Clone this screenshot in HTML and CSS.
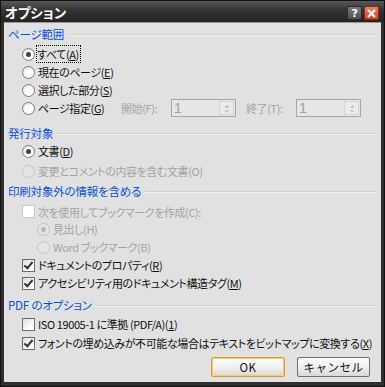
FILE: index.html
```html
<!DOCTYPE html>
<html lang="ja">
<head>
    <meta charset="UTF-8">
    <title>オプション</title>
    <link rel="stylesheet" href="styles.css">
</head>
<body>
    <div class="window">
        <div class="titlebar">
            <span class="title">オプション</span>
            <span class="tbtn help">?</span>
            <span class="tbtn close">
                <svg width="9" height="9" viewBox="0 0 9 9"><path d="M1 1L8 8M8 1L1 8" stroke="#fff" stroke-width="2.2"/></svg>
            </span>
        </div>
        <div class="content">
            <div class="group-head first"><span>ページ範囲</span></div>
            <div class="row"><span class="radio on"></span><span class="focus">すべて(<u>A</u>)</span></div>
            <div class="row"><span class="radio"></span><span>現在のページ(<u>E</u>)</span></div>
            <div class="row"><span class="radio"></span><span>選択した部分(<u>S</u>)</span></div>
            <div class="row">
                <span class="radio"></span><span class="range-label">ページ指定(<u>G</u>)</span>
                <span class="spin-label off">開始(F):</span>
                <span class="spin"><span class="val">1</span><span class="arrows"></span></span>
                <span class="spin-label off gap">終了(T):</span>
                <span class="spin"><span class="val">1</span><span class="arrows"></span></span>
            </div>

            <div class="group-head g2"><span>発行対象</span></div>
            <div class="row"><span class="radio on"></span><span>文書(<u>D</u>)</span></div>
            <div class="row r-gap off"><span class="radio"></span><span>変更とコメントの内容を含む文書(O)</span></div>

            <div class="group-head g3"><span>印刷対象外の情報を含める</span></div>
            <div class="row r-gap3 short off"><span class="check"></span><span>次を使用してブックマークを作成(C):</span></div>
            <div class="row sub off"><span class="radio on"></span><span>見出し(H)</span></div>
            <div class="row sub off"><span class="radio"></span><span>Word ブックマーク(B)</span></div>
            <div class="row"><span class="check on"></span><span>ドキュメントのプロパティ(<u>R</u>)</span></div>
            <div class="row"><span class="check on"></span><span>アクセシビリティ用のドキュメント構造タグ(<u>M</u>)</span></div>

            <div class="group-head g4"><span>PDF のオプション</span></div>
            <div class="row r-gap1"><span class="check"></span><span>ISO 19005-1 に準拠 (PDF/A)(<u>1</u>)</span></div>
            <div class="row r-gap1"><span class="check on"></span><span>フォントの埋め込みが不可能な場合はテキストをビットマップに変換する(<u>X</u>)</span></div>

            <div class="buttons">
                <button class="btn default">OK</button>
                <button class="btn">キャンセル</button>
            </div>
        </div>
    </div>
</body>
</html>
```

FILE: styles.css
```css
body {
    margin: 0;
    padding: 0;
    font-family: "Noto Sans CJK JP", "Noto Sans", sans-serif;
    font-size: 11px;
    letter-spacing: -0.4px;
    font-feature-settings: "palt";
    color: #111;
}
.window {
    width: 385px;
    height: 387px;
    box-sizing: border-box;
    background: #2e2e2e;
    border: 1px solid #111;
    padding: 0 3px 4px 3px;
    display: flex;
    flex-direction: column;
}
.titlebar {
    height: 21px;
    display: flex;
    align-items: center;
    background: linear-gradient(#575757, #333 45%, #242424);
    margin: 0 -3px;
    padding: 0 4px;
}
.title {
    color: #fff;
    font-weight: bold;
    font-size: 13.5px;
    letter-spacing: 0;
    flex: 1;
    margin-top: 1px;
}
.tbtn {
    width: 13px;
    height: 12px;
    border-radius: 2px;
    display: flex;
    align-items: center;
    justify-content: center;
    color: #fff;
    font: bold 11px "DejaVu Sans", sans-serif;
    margin-top: 3px;
}
.help {
    background: linear-gradient(#7a7a7a, #4e4e4e);
    border: 1px solid #2a2a2a;
    margin-right: 2px;
}
.close {
    background: linear-gradient(#f08060, #d84020);
    border: 1px solid #8a2a10;
    margin-right: 1px;
}
.content {
    flex: 1;
    background: #e1e1e1;
    border-top: 1px solid #9a9a9a;
    padding: 2px 4px 0 4px;
    display: flex;
    flex-direction: column;
}
.group-head {
    height: 18px;
    display: flex;
    align-items: center;
    color: #0650e0;
    font-size: 11.5px;
    letter-spacing: -0.2px;
}
.group-head::after {
    content: "";
    flex: 1;
    height: 1px;
    background: #d0d0d0;
    border-bottom: 1px solid #f0f0f0;
    margin-left: 4px;
    margin-top: 1px;
}
.g2 { margin-top: 7px; }
.g3 { margin-top: 2px; }
.g4 { margin-top: 4px; }
.row {
    height: 18px;
    display: flex;
    align-items: center;
    padding-left: 14px;
    white-space: nowrap;
}
.first + .row { margin-top: 2px; }
.r-gap { margin-top: 2px; }
.r-gap3 { margin-top: 3px; }
.r-gap1 { margin-top: 1px; }
.short { height: 17px; }
.sub { padding-left: 29px; }
.off { color: #a3a3a3; }
.radio {
    width: 13px;
    height: 13px;
    box-sizing: border-box;
    border-radius: 50%;
    border: 1px solid #7c7c7c;
    background: radial-gradient(circle at 60% 65%, #fff 40%, #d8d8d8);
    margin-right: 3px;
    position: relative;
    flex: none;
}
.radio.on::after {
    content: "";
    position: absolute;
    left: 3px;
    top: 3px;
    width: 5px;
    height: 5px;
    border-radius: 50%;
    background: #444;
}
.off .radio {
    border-color: #c4c4c4;
    background: #e4e4e4;
}
.off .radio.on::after { background: #b8b8b8; }
.check {
    width: 13px;
    height: 13px;
    box-sizing: border-box;
    border: 1px solid #6c6c6c;
    background: linear-gradient(135deg, #dcdcdc, #fff 70%);
    margin-right: 3px;
    position: relative;
    flex: none;
}
.check.on::after {
    content: "";
    position: absolute;
    left: 3px;
    top: 0px;
    width: 3px;
    height: 7px;
    border: solid #333;
    border-width: 0 2px 2px 0;
    transform: rotate(40deg);
}
.off .check {
    border-color: #c8c8c8;
    background: #fff;
}
.focus {
    outline: 1px dotted #000;
    padding: 0 1px 0 0;
    margin-left: -1px;
    line-height: 16px;
}
.range-label { width: 83px; }
.spin-label { width: 50px; }
.spin-label.gap { margin-left: 10px; }
.spin {
    width: 65px;
    height: 18px;
    box-sizing: border-box;
    border: 1px solid #a6a6a6;
    background: #e6e6e6;
    display: flex;
    align-items: center;
    justify-content: space-between;
    color: #a0a0a0;
    font: 14px "Liberation Sans", sans-serif;
}
.spin .val { padding-left: 2px; }
.arrows {
    width: 15px;
    height: 14px;
    margin-right: 1px;
    border: 1px solid #d4d4d4;
    box-sizing: border-box;
    background:
        linear-gradient(to bottom right, transparent 50%, #c8c8c8 50%) 4px 3px / 3px 3px no-repeat,
        linear-gradient(to bottom left, transparent 50%, #c8c8c8 50%) 7px 3px / 3px 3px no-repeat,
        linear-gradient(to top right, transparent 50%, #c8c8c8 50%) 4px 8px / 3px 3px no-repeat,
        linear-gradient(to top left, transparent 50%, #c8c8c8 50%) 7px 8px / 3px 3px no-repeat,
        #ececec;
}
.buttons {
    display: flex;
    justify-content: flex-end;
    gap: 12px;
    margin-top: 5px;
    padding-right: 7px;
}
.btn {
    width: 73px;
    height: 20px;
    box-sizing: border-box;
    border: 1px solid #707070;
    border-radius: 2px;
    background: linear-gradient(#fdfdfd, #f0f0f0 50%, #d8d8d8);
    font-family: "Noto Sans CJK JP", sans-serif;
    font-size: 11.5px;
    letter-spacing: 0.5px;
    color: #111;
    padding: 0;
}
.btn.default {
    width: 74px;
    border-color: #d89a3a;
    box-shadow: inset 0 0 0 1px #f6c870;
}
```
